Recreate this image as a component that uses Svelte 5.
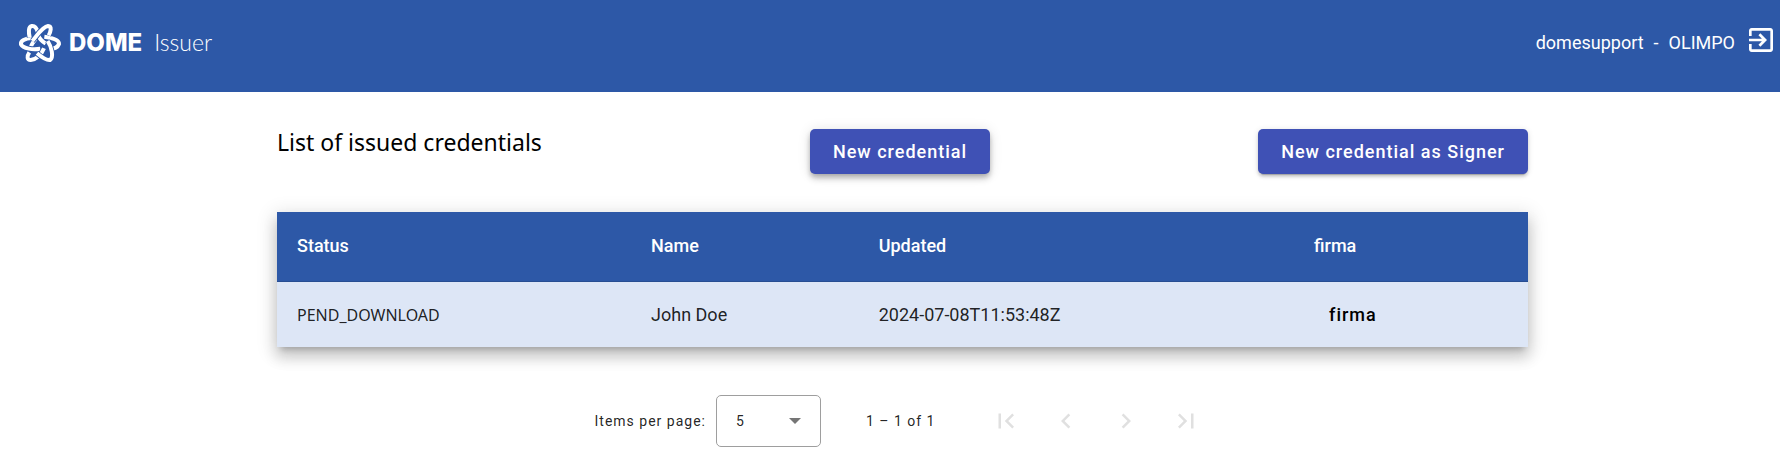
<script>
  const rows = [
    { status: 'PEND_DOWNLOAD', name: 'John Doe', updated: '2024-07-08T11:53:48Z', action: 'firma' }
  ];
  const pageSizes = [5, 10, 25];
  let pageSize = $state(5);

  const pagerButtons = [
    { label: 'First page', path: 'M18.41 16.59L13.82 12l4.59-4.59L17 6l-6 6 6 6zM6 6h2v12H6z' },
    { label: 'Previous page', path: 'M15.41 7.41L14 6l-6 6 6 6 1.41-1.41L10.83 12z' },
    { label: 'Next page', path: 'M10 6L8.59 7.41 13.17 12l-4.58 4.59L10 18l6-6z' },
    { label: 'Last page', path: 'M5.59 7.41L10.18 12l-4.59 4.59L7 18l6-6-6-6zM16 6h2v12h-2z' }
  ];

  // Strands of the woven star, back to front.
  const strands = [
    'M64 44C68 54 77 62 86 68',
    'M41 80C43 70 50 62 56 54',
    'M44 51C24 52 10 60 12 70C18 83 48 87 70 83',
    'M38 49C35 36 33 17 44 15C56 13 60 24 63 35',
    'M82 47C104 50 127 57 126 69C122 80 108 84 96 84',
    'M46 60C60 44 76 17 93 15C106 16 101 32 95 43',
    'M37 94C29 106 30 117 41 117C57 115 72 104 81 82',
    'M60 97C72 107 88 119 99 117C111 109 104 78 92 60'
  ];
</script>

<header class="topbar">
  <a class="brand" href="#home">
    <svg class="mark" viewBox="0 0 138 132" aria-hidden="true">
      {#each strands as strand}
        <path class="casing" d={strand} />
        <path class="strand" d={strand} />
      {/each}
    </svg>
    <span class="dome">DOME</span>
    <span class="issuer">Issuer</span>
  </a>
  <div class="account">
    <span>domesupport</span>
    <span>-</span>
    <span>OLIMPO</span>
    <button class="logout" aria-label="Log out">
      <svg viewBox="0 0 24 24" aria-hidden="true">
        <path d="M10.09 15.59L11.5 17l5-5-5-5-1.41 1.41L12.67 11H3v2h9.67l-2.58 2.59zM19 3H5c-1.11 0-2 .9-2 2v4h2V5h14v14H5v-4H3v4c0 1.1.89 2 2 2h14c1.1 0 2-.9 2-2V5c0-1.1-.9-2-2-2z" />
      </svg>
    </button>
  </div>
</header>

<main>
  <div class="heading">
    <h1>List of issued credentials</h1>
    <button class="primary raised">New credential</button>
    <button class="primary">New credential as Signer</button>
  </div>

  <table>
    <colgroup>
      <col class="c-status" /><col class="c-name" /><col class="c-updated" /><col />
    </colgroup>
    <thead>
      <tr><th>Status</th><th>Name</th><th>Updated</th><th>firma</th></tr>
    </thead>
    <tbody>
      {#each rows as row}
        <tr>
          <td class="status">{row.status}</td>
          <td>{row.name}</td>
          <td>{row.updated}</td>
          <td><button class="text-button">{row.action}</button></td>
        </tr>
      {/each}
    </tbody>
  </table>

  <nav class="paginator" aria-label="Pagination">
    <label for="page-size">Items per page:</label>
    <div class="select">
      <select id="page-size" bind:value={pageSize}>
        {#each pageSizes as size}<option value={size}>{size}</option>{/each}
      </select>
      <svg viewBox="0 0 12 6" aria-hidden="true"><path d="M0 0h12L6 6z" /></svg>
    </div>
    <span class="range">1 – 1 of 1</span>
    <div class="pages">
      {#each pagerButtons as button}
        <button disabled aria-label={button.label}>
          <svg viewBox="0 0 24 24" aria-hidden="true"><path d={button.path} /></svg>
        </button>
      {/each}
    </div>
  </nav>
</main>

<style>
  :global(body) {
    background: #fff;
    color: #000;
    font-family: Roboto, sans-serif;
  }
  button {
    border: 0;
    padding: 0;
    background: none;
    font: inherit;
    cursor: pointer;
  }
  .topbar {
    display: flex;
    justify-content: space-between;
    height: 92px;
    box-sizing: border-box;
    padding: 22px 3px 0 17px;
    background: #2d58a7;
    color: #fff;
  }
  .brand {
    display: flex;
    align-items: center;
    height: 42px;
    color: inherit;
    text-decoration: none;
  }
  .mark {
    width: 46px;
    height: 44px;
  }
  .mark path {
    fill: none;
  }
  .casing {
    stroke: #2d58a7;
    stroke-width: 17;
  }
  .strand {
    stroke: #fff;
    stroke-width: 12;
  }
  .dome {
    margin-left: 6px;
    font: 800 24px/40px Inter, sans-serif;
  }
  .issuer {
    margin-left: 12px;
    font: 300 23px/40px Lato, sans-serif;
    padding-bottom: 2px;
  }
  .account {
    display: flex;
    gap: 10px;
    font-size: 18px;
    line-height: 42px;
    height: 42px;
  }
  .logout {
    display: flex;
    align-items: center;
    height: 36px;
    color: inherit;
  }
  .logout svg {
    width: 32px;
    height: 32px;
    fill: currentColor;
  }
  main {
    margin: 37px 252px 0 277px;
  }
  .heading {
    display: flex;
    justify-content: space-between;
    align-items: flex-start;
  }
  h1 {
    margin: 0;
    font: 400 23px/27px "Noto Sans", sans-serif;
  }
  .primary {
    height: 45px;
    padding: 0 23px;
    border-radius: 5px;
    background: #3f51b5;
    color: #fff;
    font-weight: 500;
    font-size: 18px;
    letter-spacing: 1px;
    box-shadow: 0 4px 1px -3px rgba(0, 0, 0, 0.2), 0 3px 3px rgba(0, 0, 0, 0.14), 0 1px 6px rgba(0, 0, 0, 0.12);
  }
  .raised {
    box-shadow: 0 3px 5px -1px rgba(0, 0, 0, 0.2), 0 5px 6px rgba(0, 0, 0, 0.14), 0 1px 13px rgba(0, 0, 0, 0.12);
  }
  table {
    width: 100%;
    margin-top: 38px;
    border-collapse: collapse;
    table-layout: fixed;
    font-size: 18px;
    box-shadow: 0 6px 6px -4px rgba(0, 0, 0, 0.2), 0 10px 13px 1px rgba(0, 0, 0, 0.14), 0 4px 18px 3px rgba(0, 0, 0, 0.12);
  }
  .c-status {
    width: 28.3%;
  }
  .c-name {
    width: 18.2%;
  }
  .c-updated {
    width: 34.8%;
  }
  th,
  td {
    padding: 0 20px;
    text-align: left;
  }
  th {
    height: 66px;
    padding-bottom: 4px;
    background: #2d58a7;
    color: #fff;
    font-weight: 500;
    box-shadow: inset 0 -1px #274d92;
  }
  td {
    height: 65px;
    background: #dde6f6;
    color: rgba(0, 0, 0, 0.87);
  }
  .status {
    font-family: "Noto Sans", sans-serif;
    font-size: 16px;
  }
  .text-button {
    padding: 0 15px;
    color: #000;
    font-weight: 500;
    letter-spacing: 1px;
  }
  .paginator {
    display: flex;
    align-items: center;
    justify-content: center;
    margin-top: 48px;
    padding-left: 5px;
    color: rgba(0, 0, 0, 0.87);
    font-size: 14px;
    letter-spacing: 1px;
  }
  .select {
    display: grid;
    align-items: center;
    width: 105px;
    margin-left: 10px;
  }
  select,
  .select svg {
    grid-area: 1 / 1;
  }
  select {
    appearance: none;
    width: 100%;
    height: 52px;
    padding: 0 19px;
    border: 1px solid #9e9e9e;
    border-radius: 5px;
    background: #fff;
    color: inherit;
    font: inherit;
  }
  .select svg {
    justify-self: end;
    width: 12px;
    height: 6px;
    margin-right: 20px;
    fill: #757575;
    pointer-events: none;
  }
  .range {
    margin-left: 45px;
  }
  .pages {
    display: flex;
    margin-left: 40px;
  }
  .pages button {
    display: grid;
    place-items: center;
    width: 60px;
    height: 52px;
  }
  .pages svg {
    width: 30px;
    height: 30px;
    fill: #e0e0e0;
  }
</style>
